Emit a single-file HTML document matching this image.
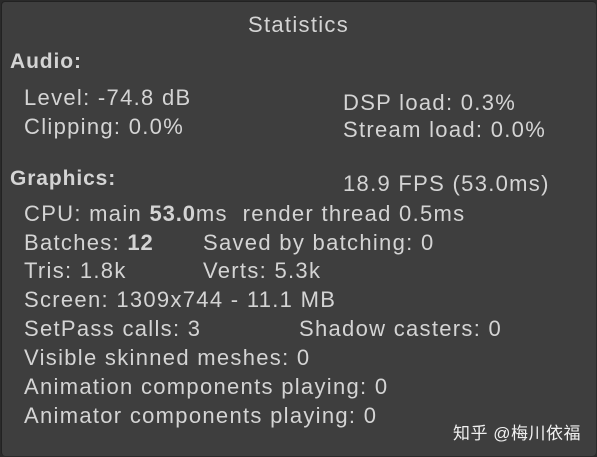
<!DOCTYPE html>
<html><head><meta charset="utf-8"><style>
html,body{margin:0;padding:0;}
body{width:597px;height:457px;background:#2a2a2a;position:relative;overflow:hidden;font-family:"Liberation Sans","Noto Sans CJK SC",sans-serif;color:#d4d4d4;}
#p{position:absolute;left:1px;top:1px;width:594px;height:454px;background:#3e3e3e;border-radius:4px;border-top:1px solid #222;border-left:1px solid #222;}
.t{position:absolute;font-size:22px;line-height:24px;white-space:nowrap;letter-spacing:1.3px;}
.h{font-weight:bold;letter-spacing:0.9px;font-size:21px;}
b{font-weight:bold;letter-spacing:0.9px;}
.wm{position:absolute;left:453px;top:419px;font-size:17px;color:#f0f0f0;letter-spacing:0.5px;}
</style></head><body><div id="p"></div>
<div class="t" style="left:248px;top:13px;">Statistics</div>
<div class="t h" style="left:10px;top:50px;">Audio:</div>
<div class="t" style="left:24px;top:86px;">Level: -74.8 dB</div>
<div class="t" style="left:24px;top:115px;">Clipping: 0.0%</div>
<div class="t" style="left:343px;top:91px;">DSP load: 0.3%</div>
<div class="t" style="left:343px;top:118px;">Stream load: 0.0%</div>
<div class="t h" style="left:10px;top:167px;">Graphics:</div>
<div class="t" style="left:343px;top:172px;">18.9 FPS (53.0ms)</div>
<div class="t" style="left:24px;top:202px;">CPU: main <b>53.0</b>ms&nbsp; render thread 0.5ms</div>
<div class="t" style="left:24px;top:231px;">Batches: <b>12</b></div>
<div class="t" style="left:203px;top:231px;">Saved by batching: 0</div>
<div class="t" style="left:24px;top:259px;">Tris: 1.8k</div>
<div class="t" style="left:203px;top:259px;">Verts: 5.3k</div>
<div class="t" style="left:24px;top:288px;">Screen: 1309x744 - 11.1 MB</div>
<div class="t" style="left:24px;top:317px;">SetPass calls: 3</div>
<div class="t" style="left:299px;top:317px;">Shadow casters: 0</div>
<div class="t" style="left:24px;top:346px;">Visible skinned meshes: 0</div>
<div class="t" style="left:24px;top:375px;">Animation components playing: 0</div>
<div class="t" style="left:24px;top:404px;">Animator components playing: 0</div>
<div class="wm">知乎 @梅川依福</div>
</body></html>
